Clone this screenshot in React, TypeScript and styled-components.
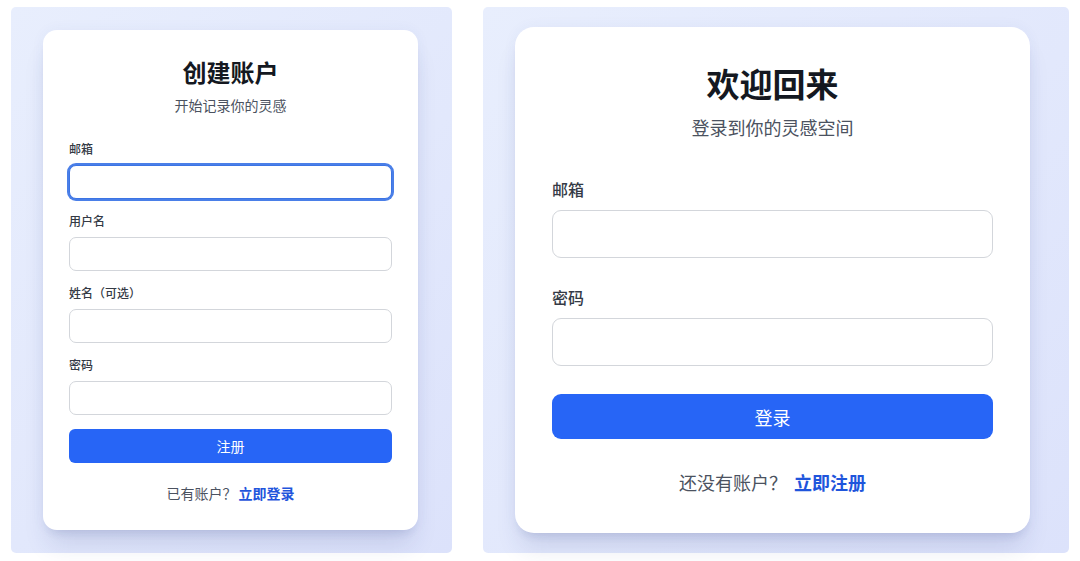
import React from "react";
import styled, { createGlobalStyle, css } from "styled-components";

const GlobalStyle = createGlobalStyle`
  html, body {
    margin: 0;
    padding: 0;
    background: #ffffff;
    font-family: "Noto Sans CJK SC", "Noto Sans", "Liberation Sans", sans-serif;
  }
  * { box-sizing: border-box; }
`;

type Size = "sm" | "lg";

const Page = styled.div`
  display: flex;
  gap: 31px;
  padding: 7px 11px;
  height: 561px;
  width: 1080px;
`;

const Panel = styled.div<{ $w: number }>`
  width: ${(p) => p.$w}px;
  height: 546px;
  border-radius: 5px;
  background: linear-gradient(135deg, #e8eefd 0%, #e2e8fc 55%, #dce2fb 100%);
  display: flex;
  align-items: center;
  padding-left: 32px;
`;

const Card = styled.div<{ $size: Size }>`
  background: #ffffff;
  display: flex;
  flex-direction: column;
  box-shadow: 0 20px 25px -5px rgba(40, 55, 120, 0.13),
    0 8px 10px -6px rgba(40, 55, 120, 0.12), 0 0 14px rgba(60, 80, 160, 0.05);
  ${(p) =>
    p.$size === "sm"
      ? css`
          width: 375px;
          border-radius: 14px;
          padding: 26px 26px 27px;
        `
      : css`
          width: 515px;
          border-radius: 19px;
          padding: 34px 37px 38px;
        `}
`;

const Title = styled.h1<{ $size: Size }>`
  margin: 0;
  text-align: center;
  font-weight: 700;
  color: #141821;
  font-size: ${(p) => (p.$size === "sm" ? 24 : 33)}px;
  line-height: ${(p) => (p.$size === "sm" ? 32 : 44)}px;
`;

const Subtitle = styled.p<{ $size: Size }>`
  margin: ${(p) => (p.$size === "sm" ? 7 : 9)}px 0 0;
  text-align: center;
  color: #4b5260;
  font-size: ${(p) => (p.$size === "sm" ? 14 : 18)}px;
  line-height: ${(p) => (p.$size === "sm" ? 20 : 26)}px;
`;

const Form = styled.div<{ $size: Size }>`
  display: flex;
  flex-direction: column;
  margin-top: ${(p) => (p.$size === "sm" ? 26 : 38)}px;
  gap: ${(p) => (p.$size === "sm" ? 14 : 28)}px;
`;

const Field = styled.div`
  display: flex;
  flex-direction: column;
`;

const Label = styled.label<{ $size: Size }>`
  color: #343a45;
  font-weight: 500;
  font-size: ${(p) => (p.$size === "sm" ? 12 : 16)}px;
  line-height: ${(p) => (p.$size === "sm" ? 16 : 22)}px;
  margin-bottom: ${(p) => (p.$size === "sm" ? 8 : 10)}px;
`;

const Input = styled.div<{ $size: Size; $focused?: boolean }>`
  width: 100%;
  background: #ffffff;
  border: 1px solid #d3d6db;
  height: ${(p) => (p.$size === "sm" ? 34 : 48)}px;
  border-radius: ${(p) => (p.$size === "sm" ? 7 : 9)}px;
  ${(p) =>
    p.$focused &&
    css`
      border-color: #3c74e4;
      box-shadow: 0 0 0 2px #4a7fe8;
    `}
`;

const Button = styled.button<{ $size: Size }>`
  border: none;
  width: 100%;
  background: #2765f6;
  color: #ffffff;
  font-family: inherit;
  cursor: pointer;
  font-size: ${(p) => (p.$size === "sm" ? 14 : 18)}px;
  height: ${(p) => (p.$size === "sm" ? 34 : 45)}px;
  border-radius: ${(p) => (p.$size === "sm" ? 6 : 9)}px;
`;

const Footer = styled.p<{ $size: Size }>`
  margin: ${(p) => (p.$size === "sm" ? 20 : 30)}px 0 0;
  text-align: center;
  color: #4b5260;
  font-size: ${(p) => (p.$size === "sm" ? 14 : 18)}px;
  line-height: ${(p) => (p.$size === "sm" ? 20 : 26)}px;
`;

const Link = styled.a<{ $size: Size }>`
  color: #1f55dc;
  font-weight: 700;
  text-decoration: none;
  margin-left: ${(p) => (p.$size === "sm" ? 2 : 7)}px;
`;

type FieldDef = { label: string; focused?: boolean };

const AuthCard: React.FC<{
  size: Size;
  title: string;
  subtitle: string;
  fields: FieldDef[];
  action: string;
  prompt: string;
  link: string;
}> = ({ size, title, subtitle, fields, action, prompt, link }) => (
  <Card $size={size}>
    <Title $size={size}>{title}</Title>
    <Subtitle $size={size}>{subtitle}</Subtitle>
    <Form $size={size}>
      {fields.map((f) => (
        <Field key={f.label}>
          <Label $size={size}>{f.label}</Label>
          <Input $size={size} $focused={f.focused} />
        </Field>
      ))}
      <Button $size={size}>{action}</Button>
    </Form>
    <Footer $size={size}>
      {prompt}
      <Link $size={size} href="#">
        {link}
      </Link>
    </Footer>
  </Card>
);

export default function App() {
  return (
    <>
      <GlobalStyle />
      <Page>
        <Panel $w={441}>
          <AuthCard
            size="sm"
            title="创建账户"
            subtitle="开始记录你的灵感"
            fields={[
              { label: "邮箱", focused: true },
              { label: "用户名" },
              { label: "姓名（可选）" },
              { label: "密码" },
            ]}
            action="注册"
            prompt="已有账户？"
            link="立即登录"
          />
        </Panel>
        <Panel $w={586}>
          <AuthCard
            size="lg"
            title="欢迎回来"
            subtitle="登录到你的灵感空间"
            fields={[{ label: "邮箱" }, { label: "密码" }]}
            action="登录"
            prompt="还没有账户？"
            link="立即注册"
          />
        </Panel>
      </Page>
    </>
  );
}
